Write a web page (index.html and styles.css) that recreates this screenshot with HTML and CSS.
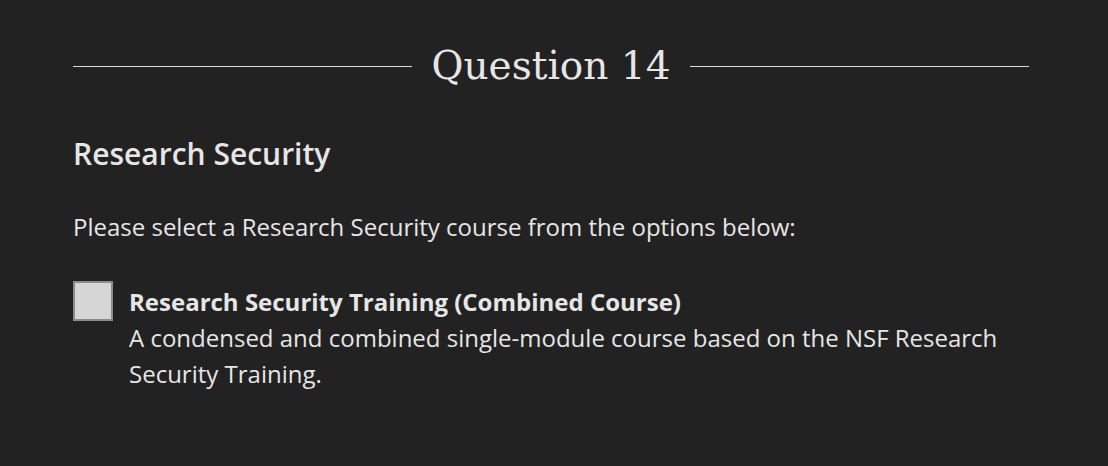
FILE: index.html
```html
<!DOCTYPE html>
<html lang="en">
<head>
    <meta charset="UTF-8">
    <meta name="viewport" content="width=device-width, initial-scale=1.0">
    <title>Question 14</title>
    <link rel="stylesheet" href="styles.css">
</head>
<body>
    <div class="pergunta">
        <div class="titulo-linha">
            <span class="linha"></span>
            <h1>Question 14</h1>
            <span class="linha"></span>
        </div>

        <h2>Research Security</h2>
        <p class="instrucao">Please select a Research Security course from the options below:</p>

        <label class="opcao">
            <input type="checkbox" class="caixa">
            <span class="opcao-texto">
                <strong>Research Security Training (Combined Course)</strong>
                <span>A condensed and combined single-module course based on the NSF Research Security Training.</span>
            </span>
        </label>
    </div>
</body>
</html>
```

FILE: styles.css
```css
*{
    margin: 0;
    padding: 0;
    box-sizing: border-box;
}
body{
    background-color: #222222;
    color: #e6e6e6;
    font-family: "Open Sans", sans-serif;
}
.pergunta{
    width: 956px;
    margin-left: 73px;
    padding-top: 38px;
}
.titulo-linha{
    display: flex;
    align-items: center;
    gap: 20px;
}
.linha{
    flex: 1;
    height: 1px;
    background-color: #d8d8d8;
}
.titulo-linha h1{
    font-family: "DejaVu Serif", serif;
    font-weight: normal;
    font-size: 39px;
    line-height: 56px;
    color: #e6e6e6;
}
h2{
    font-size: 30px;
    font-weight: 600;
    margin-top: 40px;
    line-height: 40px;
}
.instrucao{
    font-size: 24px;
    margin-top: 36px;
    line-height: 34px;
}
.opcao{
    display: flex;
    gap: 16px;
    margin-top: 36px;
    cursor: pointer;
}
.caixa{
    appearance: none;
    flex: none;
    width: 40px;
    height: 40px;
    margin-top: 1px;
    background-color: #d6d6d6;
    border: 2px solid #8c8c8c;
}
.opcao-texto{
    display: flex;
    flex-direction: column;
    font-size: 24px;
    line-height: 36px;
    padding-top: 4px;
    padding-right: 20px;
}
.opcao-texto strong{
    font-weight: 700;
}
```
